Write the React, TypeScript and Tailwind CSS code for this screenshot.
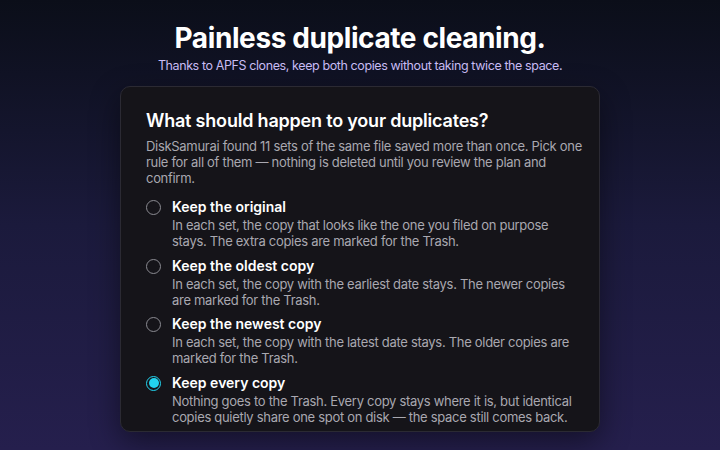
import React, { useState } from "react";

const options = [
  {
    id: "original",
    title: "Keep the original",
    lines: [
      "In each set, the copy that looks like the one you filed on purpose",
      "stays. The extra copies are marked for the Trash.",
    ],
  },
  {
    id: "oldest",
    title: "Keep the oldest copy",
    lines: [
      "In each set, the copy with the earliest date stays. The newer copies",
      "are marked for the Trash.",
    ],
  },
  {
    id: "newest",
    title: "Keep the newest copy",
    lines: [
      "In each set, the copy with the latest date stays. The older copies are",
      "marked for the Trash.",
    ],
  },
  {
    id: "every",
    title: "Keep every copy",
    lines: [
      "Nothing goes to the Trash. Every copy stays where it is, but identical",
      "copies quietly share one spot on disk — the space still comes back.",
    ],
  },
];

function Radio({ checked }: { checked: boolean }) {
  if (checked) {
    return (
      <span className="mt-[2px] flex h-[15px] w-[15px] shrink-0 items-center justify-center rounded-full border-[1.5px] border-[#22d3ee]">
        <span className="h-[10px] w-[10px] rounded-full bg-[#22d3ee]" />
      </span>
    );
  }
  return (
    <span className="mt-[2px] h-[15px] w-[15px] shrink-0 rounded-full border-[1.5px] border-[#8b8b92]" />
  );
}

export default function App() {
  const [choice, setChoice] = useState("every");

  return (
    <div
      className="flex h-[450px] w-[720px] flex-col items-center overflow-hidden bg-gradient-to-b from-[#0b0e19] via-[#1b1a3c] to-[#251f4d] pt-[20px]"
      style={{ fontFamily: "Inter, 'Noto Sans', sans-serif" }}
    >
      <h1 className="text-[28px] font-bold leading-[36px] tracking-[-0.4px] text-white">
        Painless duplicate cleaning.
      </h1>
      <p className="mt-[1px] text-[12.5px] leading-[17px] tracking-[-0.4px] text-[#c9bdf5]">
        Thanks to APFS clones, keep both copies without taking twice the space.
      </p>

      <div className="mt-[12px] w-[480px] rounded-[10px] border border-[#2b2a33] bg-[#151419] px-[25px] pb-[6px] pt-[22px] shadow-[0_10px_30px_rgba(0,0,0,0.45)]">
        <h2 className="text-[18px] font-semibold leading-[24px] tracking-[-0.2px] text-white">
          What should happen to your duplicates?
        </h2>
        <p className="mt-[5px] whitespace-nowrap text-[13px] leading-[16px] tracking-[-0.3px] text-[#a9a8b0]">
          DiskSamurai found 11 sets of the same file saved more than once. Pick one
          <br />
          rule for all of them — nothing is deleted until you review the plan and
          <br />
          confirm.
        </p>

        <div className="mt-[12px] flex flex-col gap-[7.5px]">
          {options.map((o) => (
            <button
              key={o.id}
              type="button"
              onClick={() => setChoice(o.id)}
              className="flex items-start gap-[11px] text-left"
            >
              <Radio checked={choice === o.id} />
              <span className="flex flex-col">
                <span className="text-[14px] font-semibold leading-[18px] text-white">
                  {o.title}
                </span>
                <span className="mt-[1px] flex flex-col whitespace-nowrap text-[13px] leading-[16px] tracking-[-0.3px] text-[#a9a8b0]">
                  {o.lines.map((l) => (
                    <span key={l}>{l}</span>
                  ))}
                </span>
              </span>
            </button>
          ))}
        </div>
      </div>
    </div>
  );
}
